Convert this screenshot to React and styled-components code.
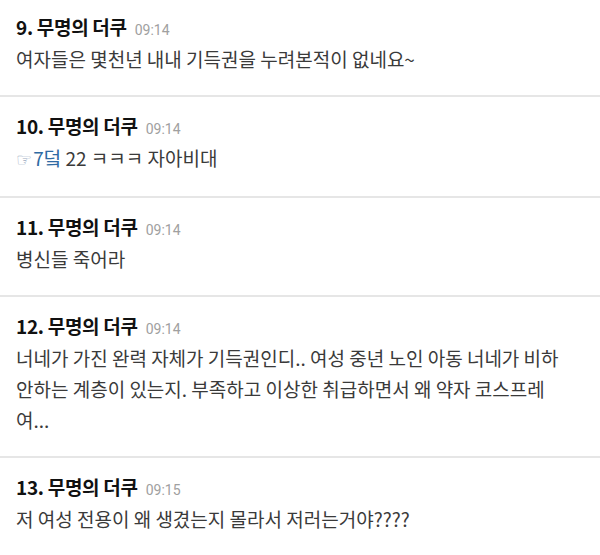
import React from "react";
import styled, { createGlobalStyle } from "styled-components";

const GlobalStyle = createGlobalStyle`
  html, body {
    margin: 0;
    padding: 0;
    background: #fff;
  }
  body {
    font-family: "Noto Sans CJK KR", "Noto Sans", sans-serif;
    overflow: hidden;
  }
`;

const comments = [
  { no: 9, time: "09:14", body: "여자들은 몇천년 내내 기득권을 누려본적이 없네요~" },
  { no: 10, time: "09:14", reply: "7덬", body: " 22 ㅋㅋㅋ 자아비대" },
  { no: 11, time: "09:14", body: "병신들 죽어라" },
  {
    no: 12,
    time: "09:14",
    body:
      "너네가 가진 완력 자체가 기득권인디.. 여성 중년 노인 아동 너네가 비하안하는 계층이 있는지. 부족하고 이상한 취급하면서 왜 약자 코스프레\n여...",
  },
  { no: 13, time: "09:15", body: "저 여성 전용이 왜 생겼는지 몰라서 저러는거야????" },
];

const CommentList = () => {
  return (
    <List>
      {comments.map((c) => (
        <Item key={c.no}>
          <Header>
            <Name>
              {c.no}. 무명의 더쿠
            </Name>
            <Time>{c.time}</Time>
          </Header>
          <Body>
            {c.reply && (
              <Reply>
                <Pointer>☞</Pointer>
                {c.reply}
              </Reply>
            )}
            {c.body}
          </Body>
        </Item>
      ))}
    </List>
  );
};

const List = styled.ul`
  list-style: none;
  margin: -2px 0 0;
  padding: 0;
  width: 600px;
`;

const Item = styled.li`
  padding: 17px 36px 21px 16px;
  border-bottom: 2px solid #e6e6e6;
`;

const Header = styled.div`
  display: flex;
  align-items: baseline;
  gap: 8px;
  height: 24px;
  line-height: 24px;
  margin-bottom: 4px;
`;

const Name = styled.span`
  font-size: 19px;
  font-weight: 700;
  color: #111;
  letter-spacing: -0.3px;
`;

const Time = styled.span`
  font-family: Roboto, "Noto Sans", sans-serif;
  font-size: 14px;
  color: #a0a0a0;
`;

const Body = styled.p`
  margin: 0;
  font-size: 19px;
  line-height: 31px;
  color: #3a3a3a;
  white-space: pre-line;
`;

const Reply = styled.span`
  color: #2f6aa3;
`;

const Pointer = styled.span`
  font-family: "DejaVu Sans", sans-serif;
  font-size: 18px;
  color: #9aabc0;
  margin-right: 1px;
`;

export default function App() {
  return (
    <>
      <GlobalStyle />
      <CommentList />
    </>
  );
}
